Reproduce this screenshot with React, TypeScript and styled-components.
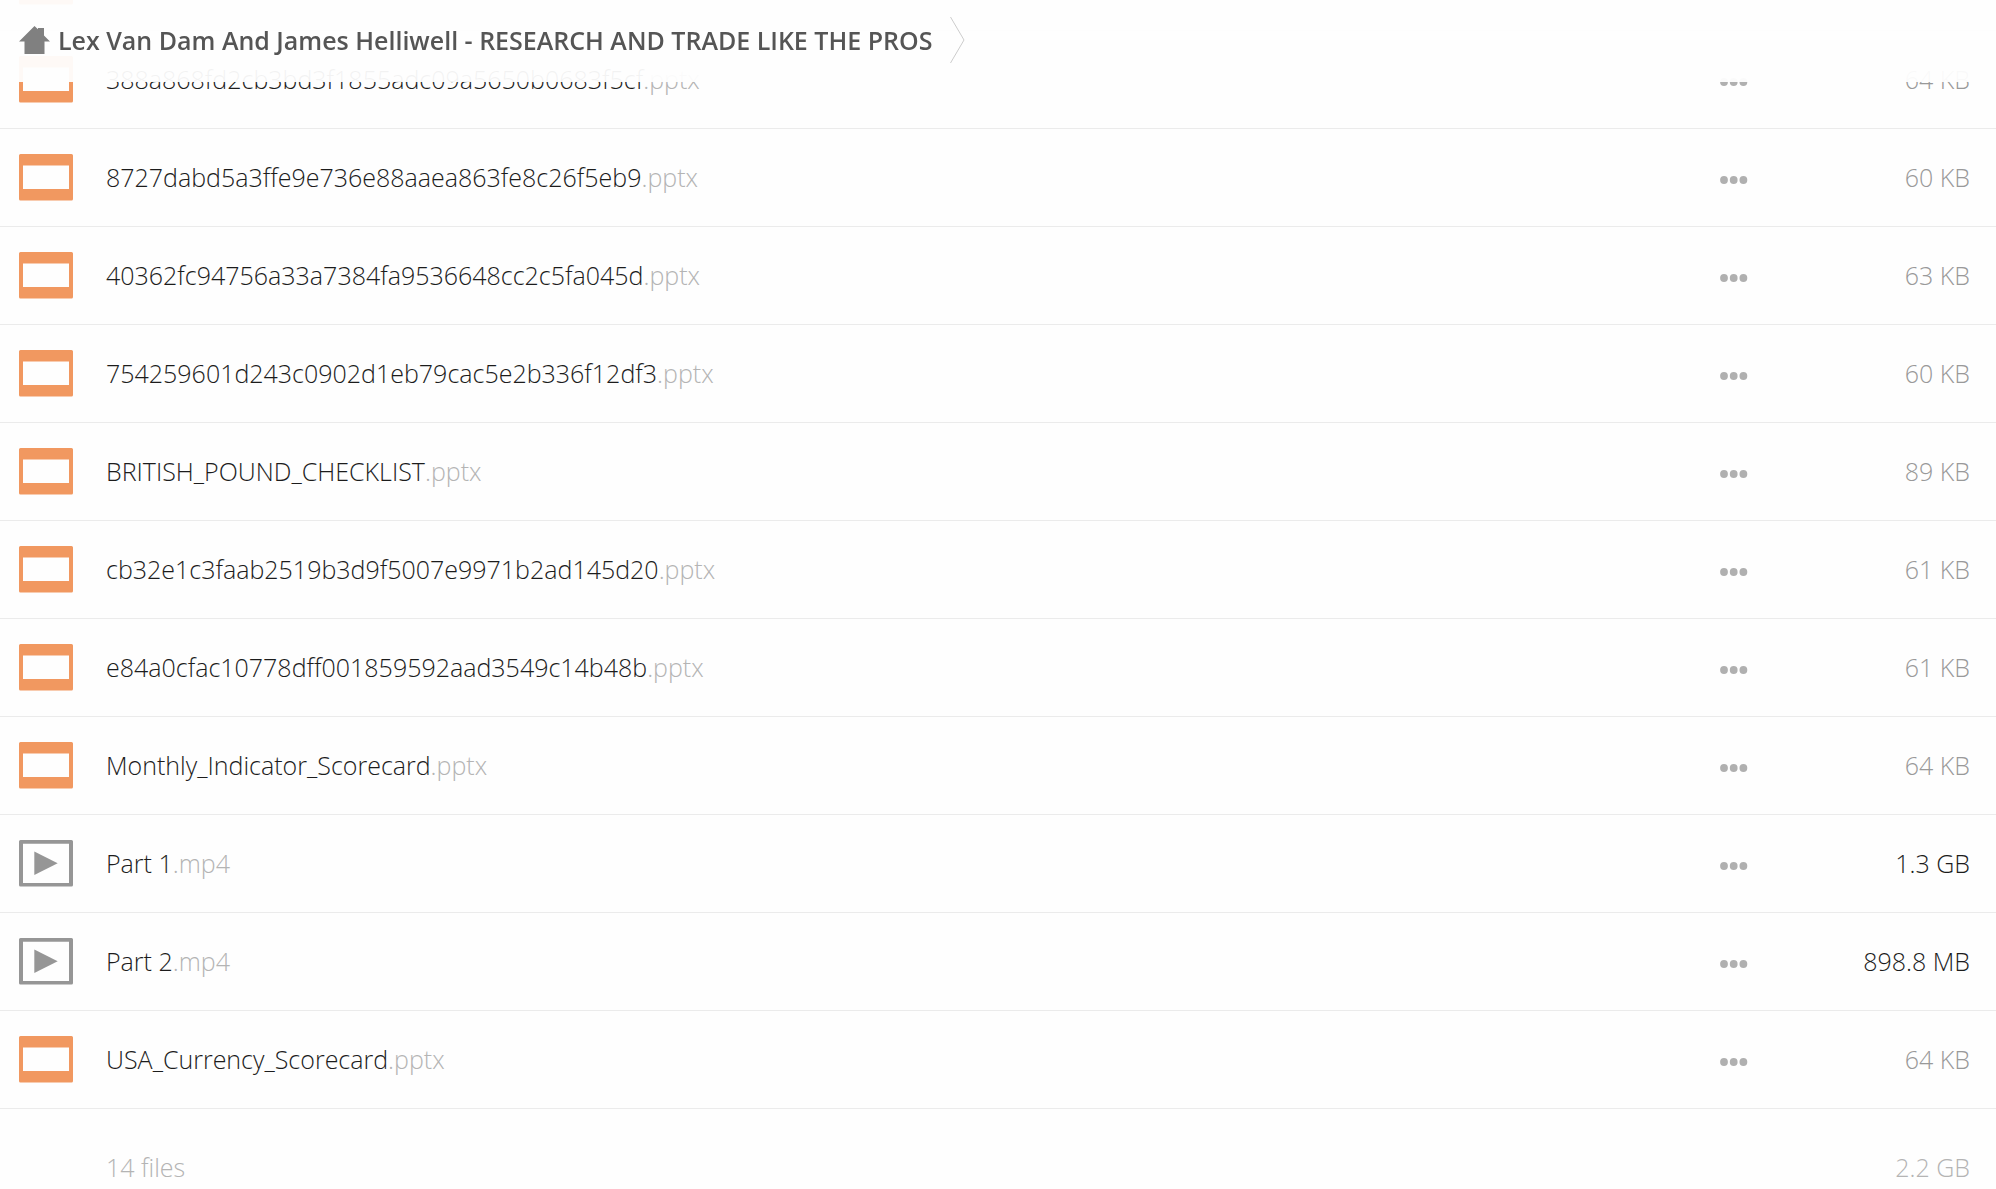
import React from "react";
import styled, { createGlobalStyle } from "styled-components";

const GlobalStyle = createGlobalStyle`
  * { box-sizing: border-box; }
  body {
    margin: 0;
    background: #fefefe;
    color: #1c1c1c;
    font-family: "Open Sans", "Noto Sans", sans-serif;
    font-size: 25px;
    font-weight: 300;
    line-height: 34px;
  }
`;

const Page = styled.div`
  overflow: hidden;
`;

const Header = styled.header`
  position: fixed;
  top: 0;
  left: 0;
  right: 0;
  z-index: 1;
  height: 82px;
  display: flex;
  align-items: center;
  padding: 0 19px 2px;
  background: rgba(254, 254, 254, 0.95);
`;

const Crumb = styled.a`
  display: flex;
  align-items: center;
  gap: 8px;
  color: #555;
  font-weight: 600;
  text-decoration: none;
  white-space: nowrap;
`;

const Separator = styled.svg`
  display: block;
  margin-left: 18px;
`;

/* The list is shown scrolled, its first row mostly above the window. */
const List = styled.main`
  margin-top: -67px;
`;

const Table = styled.table`
  width: 100%;
  table-layout: fixed;
  border-collapse: separate;
  border-spacing: 0;
`;

const Cell = styled.td`
  height: 98px;
  padding: 0;
  border-bottom: 1px solid #ebebeb;
  vertical-align: middle;
  white-space: nowrap;
`;

const IconCell = styled(Cell)`
  padding-left: 19px;

  svg {
    display: block;
  }
`;

const NameCell = styled(Cell)`
  padding-bottom: 2px;
`;

const SizeCell = styled(Cell)<{ $large?: boolean }>`
  padding: 0 26px 2px 0;
  text-align: right;
  color: ${(p) => (p.$large ? "#1c1c1c" : "#999")};
`;

const SummaryCell = styled.td<{ $end?: boolean }>`
  padding: ${(p) => (p.$end ? "41px 26px 5px 0" : "41px 0 5px")};
  text-align: ${(p) => (p.$end ? "right" : "left")};
  color: #b4b4b4;
`;

const IconCol = styled.col`
  width: 106px;
`;

const ActionCol = styled.col`
  width: 126px;
`;

const SizeCol = styled.col`
  width: 160px;
`;

const FileLink = styled.a`
  color: inherit;
  text-decoration: none;
`;

const Extension = styled.span`
  color: #b4b4b4;
`;

const MenuButton = styled.button`
  display: flex;
  align-items: center;
  height: 34px;
  padding: 4px 10px 0;
  border: 0;
  background: none;
  cursor: pointer;
`;

const HomeIcon = () => (
  <svg width="31" height="28" viewBox="0 0 31 28" aria-hidden="true">
    <path
      fill="#808080"
      d="M0 15.500 15.500 0 19 3.300V2h6v7.500l6 6h-5.500V28h-20V15.500H0z"
    />
  </svg>
);

const SlideIcon = () => (
  <svg width="54" height="47" viewBox="0 0 54 47" aria-hidden="true">
    <path
      fill="#f19860"
      fillRule="evenodd"
      d="M1.500 0h51A1.500 1.500 0 0 1 54 1.500v43.500a1.500 1.500 0 0 1-1.500 1.500h-51A1.500 1.500 0 0 1 0 45V1.500A1.500 1.500 0 0 1 1.500 0zM4 11.500V35h46V11.500z"
    />
  </svg>
);

const VideoIcon = () => (
  <svg width="54" height="47" viewBox="0 0 54 47" aria-hidden="true">
    <path
      fill="#969696"
      fillRule="evenodd"
      d="M1.500 0h51A1.500 1.500 0 0 1 54 1.500v43.500a1.500 1.500 0 0 1-1.500 1.500h-51A1.500 1.500 0 0 1 0 45V1.500A1.500 1.500 0 0 1 1.500 0zM4 3.700V43h46V3.700z"
    />
    <path fill="#969696" d="M15.300 11.500v23.500l23.400-11.700z" />
  </svg>
);

const DotsIcon = () => (
  <svg width="28" height="8" viewBox="0 0 28 8" fill="#b0b0b0" aria-hidden="true">
    <circle cx="4" cy="4" r="3.900" />
    <circle cx="13.700" cy="4" r="3.900" />
    <circle cx="23.400" cy="4" r="3.900" />
  </svg>
);

type FileEntry = { name: string; ext: "pptx" | "mp4"; size: string };

const files: FileEntry[] = [
  { name: "388a868fd2cb3bd3f1855adc09a5650b0683f5cf", ext: "pptx", size: "64 KB" },
  { name: "8727dabd5a3ffe9e736e88aaea863fe8c26f5eb9", ext: "pptx", size: "60 KB" },
  { name: "40362fc94756a33a7384fa9536648cc2c5fa045d", ext: "pptx", size: "63 KB" },
  { name: "754259601d243c0902d1eb79cac5e2b336f12df3", ext: "pptx", size: "60 KB" },
  { name: "BRITISH_POUND_CHECKLIST", ext: "pptx", size: "89 KB" },
  { name: "cb32e1c3faab2519b3d9f5007e9971b2ad145d20", ext: "pptx", size: "61 KB" },
  { name: "e84a0cfac10778dff001859592aad3549c14b48b", ext: "pptx", size: "61 KB" },
  { name: "Monthly_Indicator_Scorecard", ext: "pptx", size: "64 KB" },
  { name: "Part 1", ext: "mp4", size: "1.3 GB" },
  { name: "Part 2", ext: "mp4", size: "898.8 MB" },
  { name: "USA_Currency_Scorecard", ext: "pptx", size: "64 KB" },
];

const FileRow = ({ file }: { file: FileEntry }) => (
  <tr>
    <IconCell>{file.ext === "mp4" ? <VideoIcon /> : <SlideIcon />}</IconCell>
    <NameCell>
      <FileLink href="#">
        {file.name}
        <Extension>.{file.ext}</Extension>
      </FileLink>
    </NameCell>
    <Cell>
      <MenuButton type="button" aria-label="File menu">
        <DotsIcon />
      </MenuButton>
    </Cell>
    <SizeCell $large={file.ext === "mp4"}>{file.size}</SizeCell>
  </tr>
);

export default function App() {
  return (
    <Page>
      <GlobalStyle />
      <Header>
        <Crumb href="#">
          <HomeIcon />
          Lex Van Dam And James Helliwell - RESEARCH AND TRADE LIKE THE PROS
        </Crumb>
        <Separator width="15" height="46" viewBox="0 0 15 46" aria-hidden="true">
          <path d="M.5 0 14 23 .5 46" fill="none" stroke="#ccc" />
        </Separator>
      </Header>
      <List>
        <Table>
          <colgroup>
            <IconCol />
            <col />
            <ActionCol />
            <SizeCol />
          </colgroup>
          <tbody>
            <tr>
              <IconCell>
                <SlideIcon />
              </IconCell>
              <Cell />
              <Cell />
              <Cell />
            </tr>
            {files.map((file) => (
              <FileRow key={file.name} file={file} />
            ))}
          </tbody>
          <tfoot>
            <tr>
              <td />
              <SummaryCell colSpan={2}>14 files</SummaryCell>
              <SummaryCell $end>2.2 GB</SummaryCell>
            </tr>
          </tfoot>
        </Table>
      </List>
    </Page>
  );
}
